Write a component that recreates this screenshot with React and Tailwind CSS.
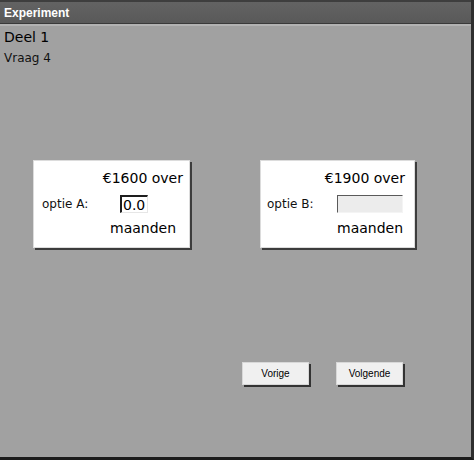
export default function App() {
  return (
    <div
      className="w-[474px] h-[460px] flex flex-col bg-[#a1a1a1] border-r-[3px] border-b-[3px] border-r-[#2e2e2e] border-b-[#1c1c1c]"
      style={{ fontFamily: '"DejaVu Sans", sans-serif' }}
    >
      {/* Title bar */}
      <div className="h-[24px] shrink-0 flex items-center px-[4px] bg-gradient-to-b from-[#636363] to-[#595959] border-t-2 border-t-[#3e3e3e] border-b border-b-[#3a3a3a]">
        <span
          className="text-[12px] font-bold text-white leading-none"
          style={{ fontFamily: '"Liberation Sans", Arial, sans-serif' }}
        >
          Experiment
        </span>
      </div>
      <div className="h-[2px] shrink-0 bg-[#b3b3b3]" />

      {/* Content */}
      <div className="flex-1 flex flex-col pl-[4px] pt-[3px]">
        <div className="text-[14px] leading-[17px] text-black">Deel 1</div>
        <div className="text-[12px] leading-[15px] text-[#111] mt-[5px]">Vraag 4</div>

        <div className="flex mt-[94px] pl-[29px]">
          {/* Option A */}
          <div className="w-[157px] h-[88px] bg-white border border-[#dcdcdc] shadow-[2px_2px_0_#3c3c3c] flex flex-col pt-[9px] pr-[6px]">
            <div className="flex justify-end text-[14px] leading-[17px] text-black">€1600 over</div>
            <div className="flex items-center mt-[8px] h-[18px]">
              <span className="pl-[8px] w-[86px] text-[12px] text-[#111]">optie A:</span>
              <div className="w-[28px] h-[18px] bg-white border-l-2 border-t-2 border-[#1e1e1e] border-r border-b border-r-[#e6e6e6] border-b-[#e6e6e6] flex items-center pl-[1px] text-[14px] leading-none text-black">
                0.0
              </div>
            </div>
            <div className="pl-[76px] mt-[7px] text-[14px] leading-[17px] text-black">maanden</div>
          </div>

          {/* Option B */}
          <div className="ml-[70px] w-[155px] h-[88px] bg-white border border-[#dcdcdc] shadow-[2px_2px_0_#3c3c3c] flex flex-col pt-[9px] pr-[9px]">
            <div className="flex justify-end text-[14px] leading-[17px] text-black">€1900 over</div>
            <div className="flex items-center mt-[8px] h-[18px]">
              <span className="pl-[6px] w-[76px] text-[12px] text-[#111]">optie B:</span>
              <div className="w-[66px] h-[18px] bg-[#ececec] border-l border-t border-[#5a5a5a] border-r border-b border-r-[#f4f4f4] border-b-[#f4f4f4]" />
            </div>
            <div className="pl-[76px] mt-[7px] text-[14px] leading-[17px] text-black">maanden</div>
          </div>
        </div>

        {/* Navigation */}
        <div
          className="flex mt-[114px] pl-[238px] gap-[27px] text-[10px] text-black"
          style={{ fontFamily: '"Liberation Sans", Arial, sans-serif' }}
        >
          <button className="w-[67px] h-[23px] bg-[#f0f0f0] border border-[#d8d8d8] shadow-[2px_2px_0_#333] flex items-center justify-center">
            Vorige
          </button>
          <button className="w-[67px] h-[23px] bg-[#f0f0f0] border border-[#d8d8d8] shadow-[2px_2px_0_#333] flex items-center justify-center">
            Volgende
          </button>
        </div>
      </div>
    </div>
  );
}
